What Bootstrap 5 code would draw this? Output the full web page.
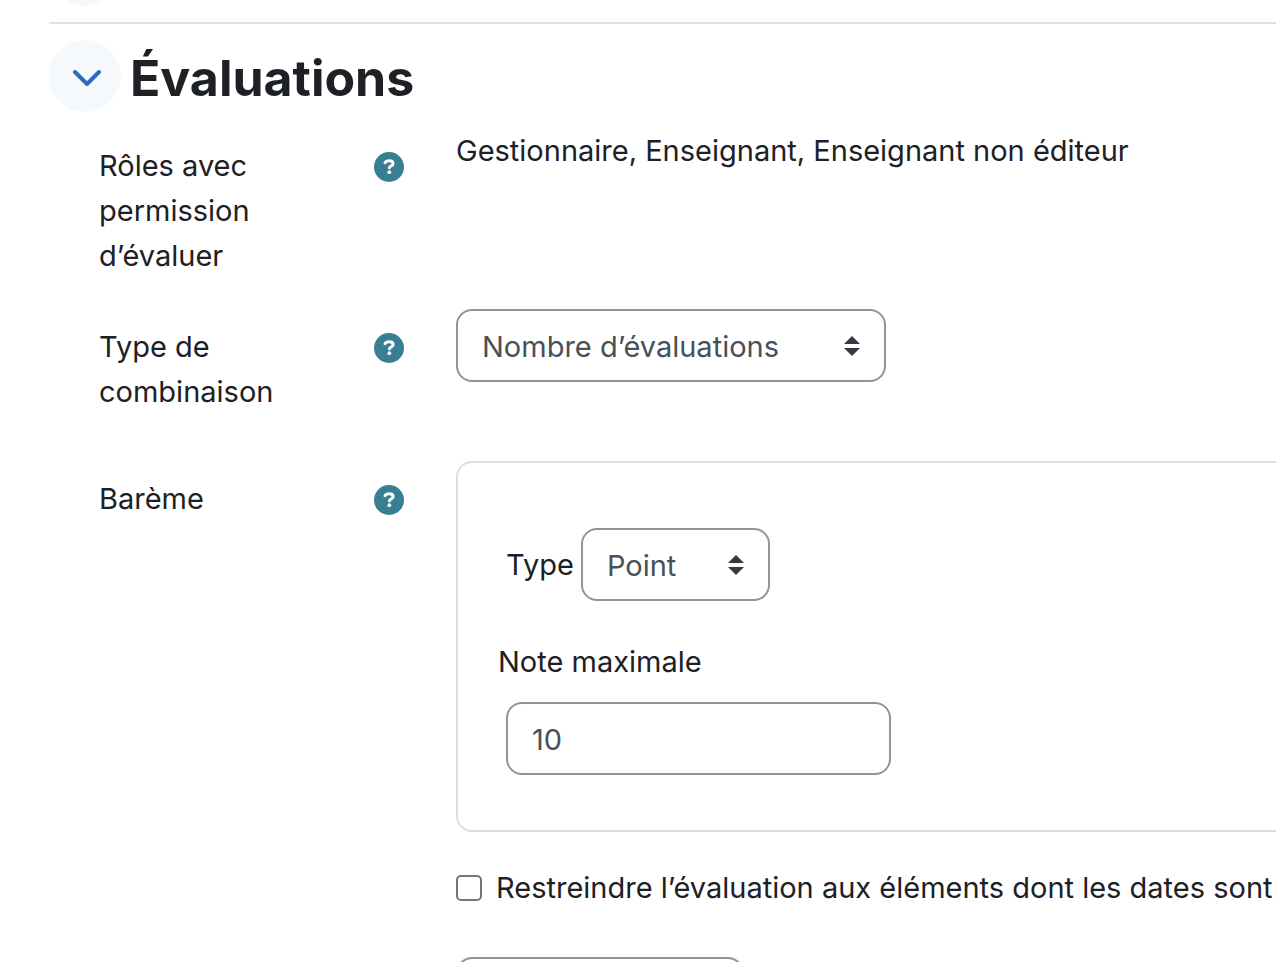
<!DOCTYPE html>
<html lang="fr">
<head>
<meta charset="utf-8">
<meta name="viewport" content="width=device-width, initial-scale=1">
<title>Évaluations</title>
<link href="https://cdn.jsdelivr.net/npm/bootstrap@5.3.0/dist/css/bootstrap.min.css" rel="stylesheet">
<style>
  body { font-family: Inter, "Liberation Sans", sans-serif; font-size: 29px; line-height: 45px; color: #1d2125; background: #fff; }
  .page { padding-left: 49px; }
  .prev-section { margin-top: -66px; }
  .divider { margin: 16px 0; border-top: 2px solid #dee2e6; opacity: 1; }
  .toggle { width: 72px; height: 72px; background: #f5f9fc; color: #2f6bbd; }
  .section-title { font-size: 50px; line-height: 60px; padding: 4px 0 0 9px; }
  .form-rows { padding: 16px 0 0 50px; }
  .label-col { flex: 0 0 307px; margin-right: 50px; padding: 15px 0; }
  .label-col > .help { margin: 9px 2px 0 0; }
  .field-row { margin-bottom: 16px; }
  .field-row-lg { margin-bottom: 32px; }
  .help { width: 30px; height: 30px; }
  .help svg { display: block; }
  .page .form-select, .page .form-control { height: 73px; border: 2px solid #8f959e; border-radius: 16px; color: #495057; font-size: 29px; line-height: 45px; padding: 13px 24px 11px; }
  .page .form-select { padding-right: 56px; background: #fff url("data:image/svg+xml,%3Csvg xmlns='http://www.w3.org/2000/svg' viewBox='0 0 4 5'%3E%3Cpath fill='%23343a40' d='M2 0L0 2h4zm0 5L0 3h4z'/%3E%3C/svg%3E") no-repeat right 24px center / 16px 20px; }
  .page .select-wide { width: 430px; }
  .page .select-type { width: 189px; }
  .page .select-day { width: 288px; }
  .page .input-grade { width: 385px; margin-left: 8px; }
  .scale-box { border: 2px solid #dedede; border-right: 0; border-radius: 16px 0 0 16px; padding: 65px 0 55px 40px; }
  .type-line { gap: 7px; padding-left: 8px; margin-bottom: 38px; }
  .grade-label { margin-bottom: 18px; }
  .page .limit-box { width: 26px; height: 26px; margin: 0 14px 0 0; border: 2px solid #767676; border-radius: 5px; }
  .limit-row { margin: 33px 0 47px; }
</style>
</head>
<body>
<main class="page vh-100 overflow-hidden">
  <div class="prev-section">
    <button type="button" class="toggle btn rounded-circle border-0 p-0 d-flex align-items-center justify-content-center" aria-label="Section précédente">
      <svg width="32" height="24" viewBox="0 0 32 24" fill="none" stroke="currentColor" stroke-width="4" stroke-linecap="round" stroke-linejoin="round"><path d="M6 6l12 12L30 6"/></svg>
    </button>
  </div>
  <hr class="divider">
  <section>
    <div class="d-flex align-items-center">
      <button type="button" class="toggle btn rounded-circle border-0 p-0 d-flex align-items-center justify-content-center flex-shrink-0" aria-label="Replier Évaluations">
        <svg width="32" height="24" viewBox="0 0 32 24" fill="none" stroke="currentColor" stroke-width="4" stroke-linecap="round" stroke-linejoin="round"><path d="M6 8l12 12L30 8"/></svg>
      </button>
      <h3 class="section-title fw-bold mb-0">Évaluations</h3>
    </div>

    <form class="form-rows">
      <div class="field-row d-flex">
        <div class="label-col d-flex justify-content-between">
          <span>Rôles avec permission d’évaluer</span>
          <button type="button" class="help btn border-0 p-0 flex-shrink-0" aria-label="Aide"><svg width="30" height="30" viewBox="0 0 30 30"><circle cx="15" cy="15" r="15" fill="#387f94"/><path d="M11 10.800c.8-1.400 2.200-2.100 4-2.100 2.600 0 4.100 1.100 4.100 2.800 0 2.400-3.700 2.500-3.700 4.300" fill="none" stroke="#fff" stroke-width="3" stroke-linecap="round"/><circle cx="15.300" cy="20.200" r="1.900" fill="#fff"/></svg></button>
        </div>
        <div class="flex-grow-1">Gestionnaire, Enseignant, Enseignant non éditeur</div>
      </div>

      <div class="field-row-lg d-flex">
        <div class="label-col d-flex justify-content-between">
          <label for="aggregate">Type de combinaison</label>
          <button type="button" class="help btn border-0 p-0 flex-shrink-0" aria-label="Aide"><svg width="30" height="30" viewBox="0 0 30 30"><circle cx="15" cy="15" r="15" fill="#387f94"/><path d="M11 10.800c.8-1.400 2.200-2.100 4-2.100 2.600 0 4.100 1.100 4.100 2.800 0 2.400-3.700 2.500-3.700 4.300" fill="none" stroke="#fff" stroke-width="3" stroke-linecap="round"/><circle cx="15.300" cy="20.200" r="1.900" fill="#fff"/></svg></button>
        </div>
        <div class="flex-grow-1">
          <select id="aggregate" class="form-select select-wide"><option>Nombre d’évaluations</option></select>
        </div>
      </div>

      <div class="d-flex">
        <div class="label-col d-flex justify-content-between align-items-start">
          <span id="scale-label">Barème</span>
          <button type="button" class="help btn border-0 p-0 flex-shrink-0" aria-label="Aide"><svg width="30" height="30" viewBox="0 0 30 30"><circle cx="15" cy="15" r="15" fill="#387f94"/><path d="M11 10.800c.8-1.400 2.200-2.100 4-2.100 2.600 0 4.100 1.100 4.100 2.800 0 2.400-3.700 2.500-3.700 4.300" fill="none" stroke="#fff" stroke-width="3" stroke-linecap="round"/><circle cx="15.300" cy="20.200" r="1.900" fill="#fff"/></svg></button>
        </div>
        <div class="flex-grow-1">
          <div class="scale-box" role="group" aria-labelledby="scale-label">
            <div class="type-line d-flex align-items-center">
              <label for="scale-type">Type</label>
              <select id="scale-type" class="form-select select-type"><option>Point</option></select>
            </div>
            <label for="grade" class="grade-label d-block">Note maximale</label>
            <input id="grade" type="text" class="form-control input-grade" value="10">
          </div>
          <div class="limit-row d-flex align-items-center">
            <input id="limit" type="checkbox" class="form-check-input limit-box flex-shrink-0">
            <label for="limit" class="text-nowrap">Restreindre l’évaluation aux éléments dont les dates sont</label>
          </div>
          <select class="form-select select-day" aria-label="Jour"></select>
        </div>
      </div>
    </form>
  </section>
</main>
<script src="https://cdn.jsdelivr.net/npm/bootstrap@5.3.0/dist/js/bootstrap.bundle.min.js"></script>
</body>
</html>
